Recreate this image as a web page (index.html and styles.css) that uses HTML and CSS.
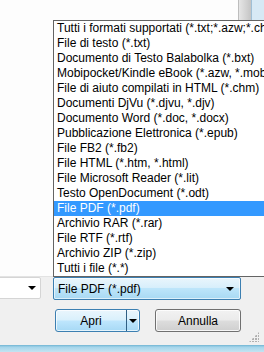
FILE: index.html
```html
<!DOCTYPE html>
<html>
<head>
<meta charset="utf-8">
<link rel="stylesheet" href="styles.css">
</head>
<body>
<div class="window">
  <div class="view">
    <div class="scroll-top"><div class="sb-grey"></div><div class="sb-blue"></div></div>
  </div>
  <div class="panel">
    <div class="combo-row">
      <div class="combo combo-name"><span class="arrow"></span></div>
      <div class="combo combo-type"><span class="label">File PDF (*.pdf)</span><span class="arrow"></span></div>
    </div>
    <div class="button-row">
      <div class="btn btn-open"><span class="btn-main">Apri</span><span class="btn-split"><span class="arrow"></span></span></div>
      <div class="btn btn-cancel">Annulla</div>
    </div>
    <div class="grip"></div>
  </div>
  <div class="frame-bottom"></div>

  <ul class="dropdown">
    <li>Tutti i formati supportati (*.txt;*.azw;*.chm;*.djvu)</li>
    <li>File di testo (*.txt)</li>
    <li>Documento di Testo Balabolka (*.bxt)</li>
    <li>Mobipocket/Kindle eBook (*.azw, *.mobi, *.prc)</li>
    <li>File di aiuto compilati in HTML (*.chm)</li>
    <li>Documenti DjVu (*.djvu, *.djv)</li>
    <li>Documento Word (*.doc, *.docx)</li>
    <li>Pubblicazione Elettronica (*.epub)</li>
    <li>File FB2 (*.fb2)</li>
    <li>File HTML (*.htm, *.html)</li>
    <li>File Microsoft Reader (*.lit)</li>
    <li>Testo OpenDocument (*.odt)</li>
    <li class="selected">File PDF (*.pdf)</li>
    <li>Archivio RAR (*.rar)</li>
    <li>File RTF (*.rtf)</li>
    <li>Archivio ZIP (*.zip)</li>
    <li>Tutti i file (*.*)</li>
  </ul>
</div>
</body>
</html>
```

FILE: styles.css
```css
html, body {
  margin: 0;
  padding: 0;
  width: 264px;
  height: 352px;
  overflow: hidden;
  background: #ffffff;
}
body {
  font-family: "Liberation Sans", Arial, sans-serif;
  font-size: 12px;
  color: #000;
}
.window {
  position: relative;
  width: 264px;
  height: 352px;
  display: flex;
  flex-direction: column;
  overflow: hidden;
}
.view {
  height: 276px;
  background: #fdfdfd;
  display: flex;
  justify-content: flex-end;
}
.scroll-top {
  display: flex;
  height: 20px;
  width: 26px;
}
.sb-grey {
  width: 12px;
  background: linear-gradient(to right, #e6e6e6, #d2d2d2 60%, #c4c4c4);
  border-left: 1px solid #bdbdbd;
}
.sb-blue {
  flex: 1;
  background: #d7e9f5;
  border-left: 1px solid #9fbfd6;
}
.panel {
  position: relative;
  flex: 1;
  background: #f0f0f0;
  border-top: 1px solid #e3e3e3;
  display: flex;
  flex-direction: column;
  gap: 9px;
}
.combo-row {
  display: flex;
  gap: 12px;
  margin-left: -20px;
}
.combo {
  position: relative;
  height: 20px;
  box-sizing: border-box;
  display: flex;
  align-items: center;
  border-radius: 2px;
}
.combo-name {
  width: 61px;
  height: 22px;
  background: #ffffff;
  border: 1px solid #d5d5d5;
  justify-content: flex-end;
  padding-right: 4px;
}
.combo-type {
  width: 188px;
  height: 23px;
  border: 1px solid #3c7fb1;
  background: linear-gradient(to bottom, #e9f5fc 0%, #d8effb 45%, #bde5fa 50%, #a8d9f3 100%);
  box-shadow: inset 0 0 0 1px rgba(255,255,255,0.6);
  padding: 0 6px 0 4px;
  justify-content: space-between;
}
.combo-type .label {
  padding-top: 1px;
}
.arrow {
  width: 0;
  height: 0;
  border-left: 4px solid transparent;
  border-right: 4px solid transparent;
  border-top: 4px solid #000;
}
.button-row {
  display: flex;
  gap: 15px;
  padding-left: 55px;
}
.btn {
  height: 23px;
  box-sizing: border-box;
  border-radius: 3px;
  display: flex;
  align-items: center;
  justify-content: center;
}
.btn-open {
  width: 85px;
  border: 1px solid #3c7fb1;
  background: linear-gradient(to bottom, #eaf6fd 0%, #d9f0fc 48%, #bee6fd 52%, #a7d9f5 100%);
  box-shadow: inset 0 0 0 1px rgba(255,255,255,0.7);
  justify-content: flex-start;
}
.btn-main {
  width: 70px;
  text-align: center;
}
.btn-split {
  flex: 1;
  align-self: stretch;
  border-left: 1px solid #2f5f84;
  display: flex;
  align-items: center;
  justify-content: center;
}
.btn-cancel {
  width: 86px;
  border: 1px solid #707070;
  background: linear-gradient(to bottom, #f2f2f2 0%, #ebebeb 48%, #dddddd 52%, #cfcfcf 100%);
  box-shadow: inset 0 0 0 1px rgba(255,255,255,0.8);
}
.grip {
  position: absolute;
  right: 5px;
  bottom: 3px;
  width: 10px;
  height: 10px;
  background:
    radial-gradient(circle at 1px 1px, #b0b0b0 1px, transparent 1px) 0 0 / 3px 3px;
  clip-path: polygon(100% 0, 100% 100%, 0 100%);
}
.frame-bottom {
  height: 7px;
  background: linear-gradient(to bottom, #6fb4d3, #a5d5ea 30%, #c4e4f2);
}
.dropdown {
  position: absolute;
  left: 53px;
  top: 20px;
  width: 260px;
  margin: 0;
  padding: 0;
  list-style: none;
  background: #ffffff;
  border: 1px solid #646464;
}
.dropdown li {
  height: 15px;
  line-height: 15px;
  padding-left: 3px;
  white-space: nowrap;
  overflow: hidden;
}
.dropdown li.selected {
  background: #3399ff;
  color: #ffffff;
}
```
